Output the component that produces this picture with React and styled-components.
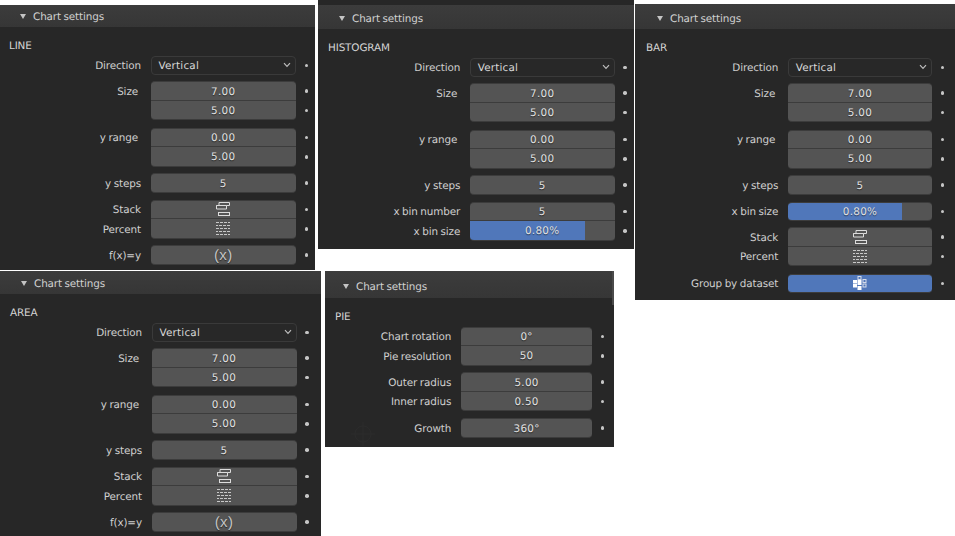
import styled, { createGlobalStyle } from "styled-components";

const GlobalStyle = createGlobalStyle`
    html, body {
        margin: 0;
        padding: 0;
        background: #fff;
    }
    #root {
        width: 955px;
        height: 536px;
        position: relative;
        overflow: hidden;
    }
`;

const Panel = styled.section`
    position: absolute;
    left: ${(p) => p.$x}px;
    top: ${(p) => p.$y}px;
    width: ${(p) => p.$w}px;
    height: ${(p) => p.$h}px;
    padding-top: ${(p) => p.$pad || 0}px;
    box-sizing: border-box;
    background: #272727;
    overflow: hidden;
    font-family: "DejaVu Sans", sans-serif;
    font-size: 10.4px;
    letter-spacing: -0.12px;
    word-spacing: -0.6px;
    text-rendering: geometricPrecision;
    color: #d4d4d4;
    --label: ${(p) => p.$label}px;
    --field: ${(p) => p.$field}px;
`;

const Header = styled.header`
    height: ${(p) => p.$h}px;
    box-sizing: border-box;
    padding-top: ${(p) => p.$drop || 0}px;
    padding-left: ${(p) => p.$inset}px;
    display: flex;
    align-items: center;
    gap: 7px;
    background: linear-gradient(#3c3c3c, #363636);
    color: #d0d0d0;
`;

const HeaderText = styled.span`
    padding-top: 1.5px;
`;

const Triangle = styled.span`
    width: 0;
    height: 0;
    border-left: 3px solid transparent;
    border-right: 3px solid transparent;
    border-top: 5px solid #c4c4c4;
`;

const Section = styled.div`
    padding: 12px 0 2.5px ${(p) => p.$inset}px;
    line-height: 14px;
    height: 14px;
`;

const Stack = styled.div`
    display: flex;
    flex-direction: column;
    gap: 6.75px;
`;

const Row = styled.div`
    display: grid;
    grid-template-columns: var(--label) var(--field) 1fr;
    height: 19.5px;
    align-items: center;
`;

const Label = styled.span`
    text-align: right;
    white-space: nowrap;
    padding-top: 1.5px;
    padding-right: ${(p) => (p.$shift ? 12.5 : 9.5)}px;
    color: #cfcfcf;
`;

const Field = styled.div`
    height: 19.5px;
    box-sizing: border-box;
    display: flex;
    align-items: center;
    justify-content: center;
    padding-top: 1.5px;
    background: ${(p) =>
        p.$fill
            ? `linear-gradient(to right, #5077ba ${p.$fill}%, #545454 ${p.$fill}%)`
            : p.$on
              ? "#5077ba"
              : "#545454"};
    color: #e2e2e2;
    letter-spacing: 0.3px;
    text-shadow: 0 1px 1px rgba(0, 0, 0, 0.55);
    border-top: 1px solid #3c3c3c;
    border-bottom: 1px solid #3c3c3c;

    svg {
        margin-top: -1.5px;
    }
`;

const Group = styled.div`
    display: flex;
    flex-direction: column;
    margin-top: ${(p) => (p.$up ? -0.5 : 0)}px;
    margin-bottom: ${(p) => (p.$up ? 0.5 : 0)}px;

    ${Row}:first-child ${Field} {
        border-top-left-radius: 4px;
        border-top-right-radius: 4px;
    }
    ${Row}:last-child ${Field} {
        border-bottom-left-radius: 4px;
        border-bottom-right-radius: 4px;
    }
    ${Row}:not(:first-child) ${Field} {
        border-top: none;
    }
`;

const Select = styled.div`
    height: 19.5px;
    box-sizing: border-box;
    display: flex;
    align-items: center;
    justify-content: space-between;
    padding: 1.5px 4px 0 7px;
    background: #282828;
    border: 1px solid #3a3a3a;
    border-radius: 4px;
    color: #d8d8d8;
    letter-spacing: 0.2px;

    svg {
        margin-top: -1.5px;
    }
`;

const Dot = styled.span`
    justify-self: start;
    margin-left: 8.5px;
    width: 3.5px;
    height: 3.5px;
    border-radius: 50%;
    background: #c6c6c6;
`;

const Formula = styled.span`
    font-family: "Liberation Sans", sans-serif;
    font-size: 15px;
    line-height: 1;
    margin-top: -1.5px;
    color: #c4c4c4;
`;

const ScrollEdge = styled.span`
    position: absolute;
    top: 0;
    right: 0;
    width: 2px;
    height: 34px;
    background: #4a4a4a;
`;

const Crosshair = styled.svg`
    position: absolute;
    left: 26px;
    bottom: 1px;
    opacity: 0.06;
`;

const Chevron = () => (
    <svg width="8" height="6" viewBox="0 0 8 6" fill="none" stroke="#bdbdbd" strokeWidth="1.2">
        <path d="M1 1.2 L4 4.4 L7 1.2" />
    </svg>
);

const StackIcon = () => (
    <svg width="14" height="14" viewBox="0 0 14 14" fill="none" stroke="#dcdcdc" strokeWidth="1">
        <path d="M3 .5H13.5V3.5H10.5V7H.5V3.5H3ZM.5 3.5H10.5" />
        <rect x="2.5" y="10.5" width="11" height="3" />
    </svg>
);

const PercentIcon = () => (
    <svg width="14" height="14" viewBox="0 0 14 14" stroke="#c8c8c8" strokeWidth="1" strokeDasharray="3 1">
        {[1.5, 4.5, 7.5, 10.5, 13.5].map((y, i) => (
            <line key={y} x1={i % 2 ? -1 : 0} y1={y} x2="14" y2={y} />
        ))}
    </svg>
);

const GroupIcon = () => (
    <svg width="14" height="14" viewBox="0 0 14 14" fill="#fff">
        <rect x="0" y="4" width="4" height="3.5" />
        <rect x="0" y="8" width="4" height="3.5" />
        <rect x="4.5" y="4" width="4" height="5" />
        <rect x="4.5" y="10" width="4" height="4" />
        <g fill="none" stroke="#d5dcea" strokeWidth="1">
            <rect x="5" y=".5" width="3" height="3" />
            <rect x="10" y="3.5" width="3" height="3" />
            <rect x="10" y="8" width="3" height="3" />
        </g>
    </svg>
);

const Setting = ({ label, shift, children, ...rest }) => (
    <Row>
        <Label $shift={shift}>{label}</Label>
        <Field {...rest}>{children}</Field>
        <Dot />
    </Row>
);

const Direction = () => (
    <Row>
        <Label>Direction</Label>
        <Select>
            Vertical
            <Chevron />
        </Select>
        <Dot />
    </Row>
);

const SizeAndRange = () => (
    <>
        <Group $up>
            <Setting label="Size" shift>7.00</Setting>
            <Setting>5.00</Setting>
        </Group>
        <Group>
            <Setting label="y range" shift>0.00</Setting>
            <Setting>5.00</Setting>
        </Group>
        <Group>
            <Setting label="y steps">5</Setting>
        </Group>
    </>
);

const StackPercent = ({ up }) => (
    <Group $up={up}>
        <Setting label="Stack"><StackIcon /></Setting>
        <Setting label="Percent"><PercentIcon /></Setting>
    </Group>
);

const Formulas = () => (
    <Group>
        <Setting label="f(x)=y"><Formula>(x)</Formula></Setting>
    </Group>
);

const Title = ({ h, drop, inset }) => (
    <Header $h={h} $drop={drop} $inset={inset}>
        <Triangle />
        <HeaderText>Chart settings</HeaderText>
    </Header>
);

const App = () => (
    <>
        <GlobalStyle />

        <Panel $x={0} $y={5} $w={315} $h={265} $label={150.5} $field={145.5}>
            <Title h={22} inset={20} />
            <Section $inset={9}>LINE</Section>
            <Stack>
                <Direction />
                <SizeAndRange />
                <StackPercent />
                <Formulas />
            </Stack>
        </Panel>

        <Panel $x={318} $y={0} $w={316} $h={249} $pad={5} $label={151.7} $field={145}>
            <Title h={24} drop={2} inset={21} />
            <Section $inset={10}>HISTOGRAM</Section>
            <Stack>
                <Direction />
                <SizeAndRange />
                <Group>
                    <Setting label="x bin number">5</Setting>
                    <Setting label="x bin size" $fill={79}>0.80%</Setting>
                </Group>
            </Stack>
        </Panel>

        <Panel $x={635} $y={4} $w={320} $h={296} $label={152.7} $field={144.7}>
            <Title h={25} drop={3} inset={22} />
            <Section $inset={11}>BAR</Section>
            <Stack>
                <Direction />
                <SizeAndRange />
                <Group>
                    <Setting label="x bin size" $fill={79}>0.80%</Setting>
                </Group>
                <StackPercent up />
                <Group>
                    <Setting label="Group by dataset" $on><GroupIcon /></Setting>
                </Group>
            </Stack>
        </Panel>

        <Panel $x={0} $y={271} $w={321} $h={265} $label={151.5} $field={145}>
            <Title h={23} drop={1} inset={21} />
            <Section $inset={10}>AREA</Section>
            <Stack>
                <Direction />
                <SizeAndRange />
                <StackPercent />
                <Formulas />
            </Stack>
        </Panel>

        <Panel $x={325} $y={271} $w={289} $h={176} $label={135.7} $field={131.8}>
            <Title h={27} drop={4} inset={18} />
            <Section $inset={10}>PIE</Section>
            <Stack>
                <Group>
                    <Setting label="Chart rotation">0°</Setting>
                    <Setting label="Pie resolution">50</Setting>
                </Group>
                <Group>
                    <Setting label="Outer radius">5.00</Setting>
                    <Setting label="Inner radius">0.50</Setting>
                </Group>
                <Group>
                    <Setting label="Growth">360°</Setting>
                </Group>
            </Stack>
            <ScrollEdge />
            <Crosshair width="24" height="24" viewBox="0 0 24 24" fill="none" stroke="#777">
                <circle cx="12" cy="12" r="8" />
                <path d="M12 0V24M0 12H24" />
            </Crosshair>
        </Panel>
    </>
);

export default App;
